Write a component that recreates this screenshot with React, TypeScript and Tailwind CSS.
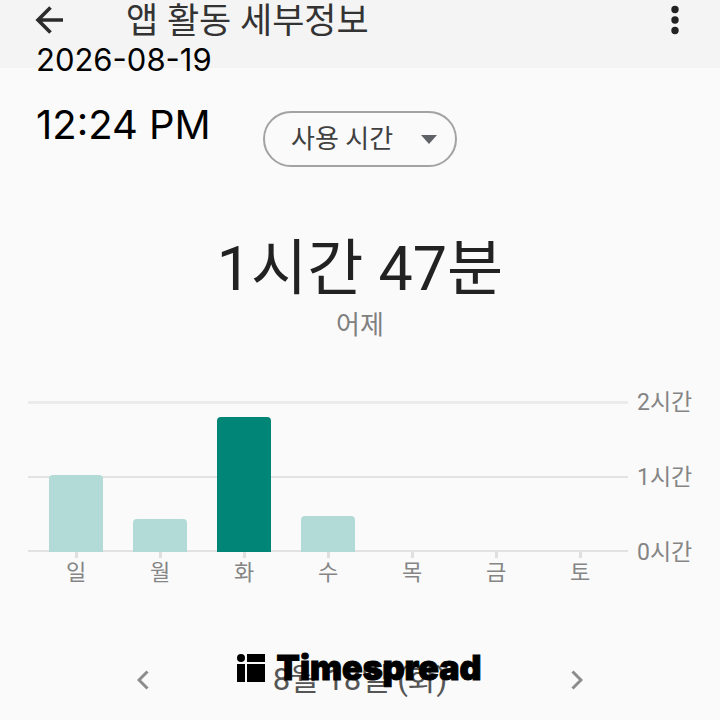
import React from 'react';
import { clsx } from 'clsx';

interface DayUsage {
    day: string;
    minutes: number;
}

const WEEK: DayUsage[] = [
    { day: '일', minutes: 61 },
    { day: '월', minutes: 26 },
    { day: '화', minutes: 107 },
    { day: '수', minutes: 29 },
    { day: '목', minutes: 0 },
    { day: '금', minutes: 0 },
    { day: '토', minutes: 0 },
];

const SELECTED_DAY = '화';
const MAX_MINUTES = 120;

const Header: React.FC = () => (
    <header className="flex h-[68px] items-start justify-between bg-[#f4f4f4] pl-8 pr-7">
        <div className="flex items-start">
            <button type="button" aria-label="뒤로" className="flex h-10 w-9 items-center justify-center">
                <svg viewBox="0 0 36 36" className="size-9" fill="none" stroke="#2b2b2b" strokeWidth="3.6">
                    <path d="M31 18H6M18.5 5.5L6 18l12.5 12.5" />
                </svg>
            </button>
            <h1 className="ml-[58px] text-[35px] leading-[44px] text-[#333333]">앱 활동 세부정보</h1>
        </div>
        <button type="button" aria-label="옵션 더보기" className="flex h-10 w-9 items-center justify-center">
            <svg viewBox="0 0 12 32" className="h-8 w-3" fill="#222222">
                <circle cx="7" cy="5.5" r="3.7" />
                <circle cx="7" cy="16" r="3.7" />
                <circle cx="7" cy="26.5" r="3.7" />
            </svg>
        </button>
    </header>
);

const MetricSelect: React.FC = () => (
    <div className="relative">
        <select
            aria-label="측정 항목"
            className="h-14 w-[194px] appearance-none rounded-full border-2 border-[#a3a3a3] bg-transparent pl-[26px] text-[26px] text-[#404040]"
        >
            <option>사용 시간</option>
            <option>알림 수신</option>
            <option>앱 열기</option>
        </select>
        <svg viewBox="0 0 16 9" className="pointer-events-none absolute right-5 top-6 h-[9px] w-4" fill="#5f6368">
            <path d="M0 0h16L8 9z" />
        </svg>
    </div>
);

const UsageChart: React.FC = () => (
    <section aria-label="주간 사용 시간" className="flex pl-7 pr-5">
        <div className="grow">
            <div className="grid h-[151px]">
                <div className="col-start-1 row-start-1 flex flex-col justify-between">
                    <div className="h-[3px] bg-[#ebebeb]" />
                    <div className="h-0.5 bg-[#e2e2e2]" />
                    <div className="h-0.5 bg-[#e2e2e2]" />
                </div>
                <div className="col-start-1 row-start-1 grid grid-cols-7 items-end px-1.5">
                    {WEEK.map(({ day, minutes }) => (
                        <div
                            key={day}
                            className={clsx(
                                'mx-auto w-[54px] rounded-t',
                                day === SELECTED_DAY ? 'bg-[#018577]' : 'bg-[#b2dbd7]'
                            )}
                            style={{ height: `${(minutes / MAX_MINUTES) * 100}%` }}
                        />
                    ))}
                </div>
            </div>
            <div className="grid grid-cols-7 px-1.5">
                {WEEK.map(({ day }) => (
                    <div key={day} className="flex flex-col items-center">
                        <div className="h-1.5 w-[3px] bg-[#e0e0e0]" />
                        <span className="text-[22px] leading-[30px] text-[#858585]">{day}</span>
                    </div>
                ))}
            </div>
        </div>
        <div className="-mt-3.5 flex h-[182px] w-[72px] shrink-0 flex-col justify-between pl-[9px] text-[23px] leading-8 text-[#858585]">
            <span>2시간</span>
            <span>1시간</span>
            <span>0시간</span>
        </div>
    </section>
);

const DatePager: React.FC = () => (
    <nav aria-label="날짜" className="flex items-center justify-between px-[125px]">
        <button type="button" aria-label="이전 날짜" className="flex size-9 items-center justify-center">
            <svg viewBox="0 0 12 20" className="h-5 w-3" fill="none" stroke="#8c8c8c" strokeWidth="3">
                <path d="M10.5 1.5L2 10l8.5 8.5" />
            </svg>
        </button>
        <span className="text-[31px] leading-10 text-[#555555]">8월 18일 (화)</span>
        <button type="button" aria-label="다음 날짜" className="flex size-9 items-center justify-center">
            <svg viewBox="0 0 12 20" className="h-5 w-3" fill="none" stroke="#8c8c8c" strokeWidth="3">
                <path d="M1.5 1.5L10 10l-8.5 8.5" />
            </svg>
        </button>
    </nav>
);

// Capture time and brand mark stamped over the screen
const Stamp: React.FC = () => (
    <div className="pointer-events-none absolute inset-0 font-['Inter',sans-serif] text-black">
        <div className="absolute left-9 top-10">
            <p className="text-[31px] leading-10">2026-08-19</p>
            <p className="mt-6 text-[40px] leading-[42px]">12:24 PM</p>
        </div>
        <div className="absolute inset-x-0 top-[649px] flex items-center justify-center gap-3 pr-0.5">
            <svg viewBox="0 0 28 28" className="size-7" fill="#000000">
                <circle cx="4" cy="4" r="4" />
                <path d="M10 0h18v8H10zM0 10h8v18H0zM10 10h18v18H10z" />
            </svg>
            <span className="text-[34px] font-black leading-[38px] [-webkit-text-stroke:1px_black]">Timespread</span>
        </div>
    </div>
);

export default function App() {
    return (
        <div className="relative min-h-screen overflow-hidden bg-[#fafafa] font-['Roboto','Noto_Sans_CJK_KR',sans-serif]">
            <Header />
            <main>
                <div className="mt-[43px] flex justify-center">
                    <MetricSelect />
                </div>
                <div className="mt-[62px] text-center">
                    <p className="text-[61px] leading-[80px] text-[#222222]">1시간 47분</p>
                    <p className="text-[26px] leading-8 text-[#808080]">어제</p>
                </div>
                <div className="mt-[60px]">
                    <UsageChart />
                </div>
                <div className="mt-[72px]">
                    <DatePager />
                </div>
            </main>
            <Stamp />
        </div>
    );
}
